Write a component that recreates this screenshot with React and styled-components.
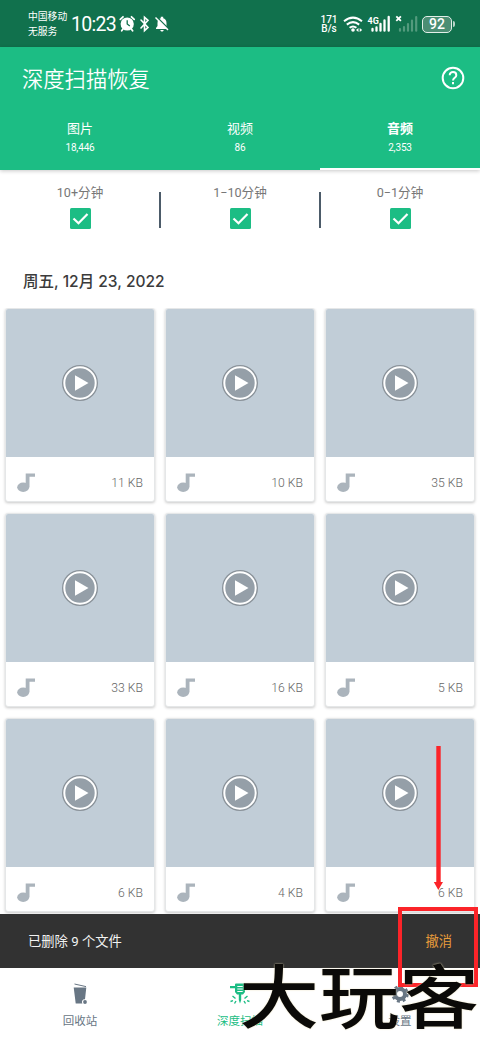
import React from 'react';
import styled, { createGlobalStyle } from 'styled-components';

const GlobalStyle = createGlobalStyle`
  * {
    box-sizing: border-box;
  }

  body {
    margin: 0;
    background: #fff;
    font-family: Roboto, 'Noto Sans CJK SC', sans-serif;
  }
`;

const Screen = styled.div`
  position: relative;
  display: flex;
  flex-direction: column;
  width: 480px;
  height: 1040px;
  overflow: hidden;
  background: #fff;
`;

const StatusBar = styled.div`
  display: flex;
  align-items: center;
  flex: none;
  height: 47px;
  padding: 1px 27px 0 28px;
  background: #11714d;
  color: #fff;
`;

const Carrier = styled.div`
  width: 43px;
  font-size: 9.8px;
  line-height: 15px;
  white-space: nowrap;
`;

const Clock = styled.div`
  width: 48px;
  padding-top: 2px;
  font-size: 19.5px;
  letter-spacing: -0.7px;
  line-height: 24px;
`;

const StatusIcons = styled.svg`
  display: block;
  flex: none;
  margin-left: ${(props) => props.$gap || '0'};
`;

const Speed = styled.div`
  width: 20px;
  margin-left: auto;
  font-size: 10px;
  font-weight: 500;
  line-height: 9.5px;
  text-align: center;
`;

const Battery = styled.div`
  position: relative;
  width: 30px;
  height: 17px;
  margin-left: 3px;
  margin-right: 1px;
  border: 1.5px solid #e3efe9;
  border-radius: 5px;
  background: #4b8e74;
  font-size: 14px;
  font-weight: 500;
  line-height: 15px;
  text-align: center;

  &::after {
    content: '';
    position: absolute;
    top: 4px;
    right: -4px;
    width: 2px;
    height: 6px;
    border-radius: 0 2px 2px 0;
    background: #b9d4c8;
  }
`;

const Header = styled.header`
  flex: none;
  height: 123px;
  background: #1cbd84;
  color: #fff;
  box-shadow: 0 1px 4px rgba(0, 0, 0, 0.22);
`;

const TitleRow = styled.div`
  display: flex;
  align-items: center;
  justify-content: space-between;
  height: 62px;
  padding: 0 15px 0 22px;
`;

const Title = styled.h1`
  margin: 0;
  font-family: 'Noto Sans CJK SC', sans-serif;
  font-size: 21.3px;
  font-weight: 350;
  line-height: 30px;
`;

const Tabs = styled.div`
  display: grid;
  grid-template-columns: repeat(3, 1fr);
  height: 61px;
`;

const Tab = styled.div`
  padding-top: 10px;
  border-bottom: 2px solid ${(props) => (props.$active ? '#fff' : 'transparent')};
  font-size: 13px;
  font-weight: ${(props) => (props.$active ? 700 : 400)};
  line-height: 20px;
  text-align: center;
`;

const TabCount = styled.div`
  font-size: 10px;
  font-weight: 400;
  letter-spacing: -0.15px;
  line-height: 18px;
`;

const Filters = styled.div`
  display: grid;
  grid-template-columns: repeat(3, 1fr);
  flex: none;
  height: 84px;
`;

const Filter = styled.div`
  position: relative;
  display: flex;
  flex-direction: column;
  align-items: center;
  padding-top: 13px;
  color: #777;
  font-size: 12.6px;
  line-height: 19px;

  &:not(:last-child)::after {
    content: '';
    position: absolute;
    top: 22px;
    right: -0.5px;
    width: 1.5px;
    height: 36px;
    background: #4c5b69;
  }
`;

const Check = styled.svg`
  display: block;
  margin-top: 6px;
`;

const DateTitle = styled.h2`
  flex: none;
  height: 54px;
  margin: 0;
  padding: 16px 0 0 23px;
  color: #3b3b3b;
  font-family: Inter, 'Noto Sans CJK SC', sans-serif;
  font-size: 15.5px;
  font-weight: 500;
  line-height: 24px;
`;

const Grid = styled.div`
  display: grid;
  grid-template-columns: repeat(3, 150px);
  grid-auto-rows: 194px;
  gap: 11px 10px;
  flex: none;
  height: 606px;
  padding-left: 5px;
  overflow: hidden;
`;

const Card = styled.div`
  display: flex;
  flex-direction: column;
  overflow: hidden;
  border: 1px solid #e5e7e8;
  border-radius: 3px;
  background: #fff;
  box-shadow: 0 1px 3px rgba(0, 0, 0, 0.22);
`;

const Thumb = styled.div`
  display: grid;
  place-items: center;
  height: 148px;
  background: #c1cdd7;
`;

const CardFooter = styled.div`
  display: flex;
  align-items: center;
  justify-content: space-between;
  flex: 1;
  padding: 7px 11px 0 11px;
  color: #666;
  font-size: 12.2px;
  font-weight: 300;
`;

const Snackbar = styled.div`
  display: flex;
  align-items: center;
  justify-content: space-between;
  flex: none;
  height: 54px;
  padding: 0 28px 2px;
  background: #323232;
  color: #f2f2f2;
  font-size: 13.3px;
`;

const Undo = styled.span`
  color: #e79c3b;
`;

const BottomNav = styled.nav`
  display: grid;
  grid-template-columns: repeat(3, 1fr);
  flex: none;
  height: 72px;
  background: #fff;
`;

const NavItem = styled.div`
  display: flex;
  flex-direction: column;
  align-items: center;
  padding-top: 15px;
  color: ${(props) => (props.$active ? '#1cbd84' : '#687684')};
  font-size: 11.5px;
  line-height: 18px;

  svg {
    display: block;
    margin-bottom: 7px;
  }
`;

const Arrow = styled.svg`
  position: absolute;
  top: 746px;
  left: 433px;
`;

const Highlight = styled.div`
  position: absolute;
  top: 907px;
  left: 398px;
  width: 80px;
  height: 80px;
  border: 4px solid #fb2429;
`;

const Watermark = styled.div`
  position: absolute;
  top: 953px;
  left: 239px;
  color: #0b0a08;
  font-family: 'Noto Sans CJK SC', sans-serif;
  font-size: 80px;
  font-weight: 500;
  line-height: 80px;
  white-space: nowrap;
  transform: scaleY(0.87);
  text-shadow: 0 0 2px #e9dfb8;
`;

const tabs = [
  { label: '图片', count: '18,446' },
  { label: '视频', count: '86' },
  { label: '音频', count: '2,353', active: true },
];

const filters = ['10+分钟', '1−10分钟', '0−1分钟'];

const sizes = [11, 10, 35, 33, 16, 5, 6, 4, 6];

const PlayIcon = () => (
  <svg width="36" height="36" viewBox="0 0 36 36">
    <circle cx="18" cy="18" r="18" fill="#8a9299" />
    <circle cx="18" cy="18" r="15.7" fill="#959fa8" stroke="#fff" strokeWidth="2" />
    <path d="M13 10.2v15.6L26.5 18z" fill="#fff" />
  </svg>
);

const NoteIcon = () => (
  <svg width="18" height="19" viewBox="0 0 18 19" fill="#abb4bc">
    <ellipse cx="6.2" cy="14.2" rx="6" ry="4.7" />
    <path d="M8.7 .5H18v3.3h-5.5V14H8.7z" />
  </svg>
);

const LeftStatus = () => (
  <StatusIcons width="50" height="18" viewBox="0 0 50 18">
    <g fill="none" stroke="#fff" strokeWidth="1.8" strokeLinecap="round">
      <path d="M1.3 4.3 4 1.8M12.5 1.8l2.7 2.5M4 14l-1.3 1.8M12.3 14l1.3 1.8" />
      <path d="m22 5 7 7.4-3.5 3.2V2.2L29 5.4 22 13" strokeWidth="1.6" />
    </g>
    <circle cx="8.2" cy="9" r="6.6" fill="#fff" />
    <path d="M8.2 5.2V9l2.6 2" fill="none" stroke="#11714d" strokeWidth="1.3" />
    <path d="M37 14h12v-1l-1.5-2V8c0-3-1.5-4.4-3.3-4.8V1.8h-2.4v1.4C40 3.6 38.5 5 38.5 8v3L37 13zM41.3 15h3.4c-.4 2-3 2-3.4 0" fill="#fff" />
    <path d="m37.8 2 12 12" stroke="#11714d" strokeWidth="1.4" />
    <path d="m36.5 2.5 12.5 12.5" stroke="#fff" strokeWidth="1.4" />
  </StatusIcons>
);

const RightStatus = () => (
  <StatusIcons width="76" height="20" viewBox="0 0 76 20" $gap="4px">
    <g fill="none" stroke="#fff" strokeWidth="2">
      <path d="M1 7.2q9-7.2 18 0M3.8 10.6q6.2-5 12.4 0M6.6 13.8q3.4-2.7 6.8 0" />
    </g>
    <circle cx="10" cy="16" r="1.8" fill="#fff" />
    <path d="m13 16 2.5-2v4zm6.2 0-2.5-2v4z" fill="#fff" />
    <text x="24.5" y="9.5" fill="#fff" fontFamily="Roboto, sans-serif" fontSize="9" fontWeight="700">4G</text>
    <g stroke="#fff" strokeWidth="2.3" strokeLinecap="round">
      <path d="M29.5 15v1.7M33.5 13.5v3.2M37.5 10v6.7M41.5 6.5v10.2M45.7 3v13.7" />
    </g>
    <path d="m53.3 2.3 4.6 4.6m0-4.6-4.6 4.6" stroke="#fff" strokeWidth="1.8" />
    <g stroke="#539a7d" strokeWidth="2.2" strokeLinecap="round">
      <path d="M57 15v1.7M61 13v3.7M65 10v6.7M69 6.5v10.2M73.2 3v13.7" />
    </g>
  </StatusIcons>
);

const HelpIcon = () => (
  <svg width="24" height="24" viewBox="0 0 24 24" fill="none" stroke="#fff" strokeWidth="2">
    <circle cx="12" cy="12" r="10.3" />
    <path d="M8.7 9.2c0-4.2 6.6-4.1 6.6 0 0 2.6-3.3 2.7-3.3 5.4M12 16v2.3" />
  </svg>
);

const BinIcon = () => (
  <svg width="18" height="22" viewBox="0 0 18 22">
    <path d="m3.5 1 11.5 2.6" stroke="#687684" strokeWidth="1" />
    <path d="M2.7 4.5h12.6l-1.3 11.8a2.7 2.7 0 0 0-2.6 4.2H4.7z" fill="#687684" />
    <circle cx="14" cy="19" r="1.9" fill="#687684" />
  </svg>
);

const DrillIcon = () => (
  <svg width="22" height="22" viewBox="0 0 22 22">
    <path d="M1 3h5V1.5Q6 .5 7 .5h8q1 0 1 1V3h5v2.2h-5V9l-2 2.5h-1.8V17L11 20.5 9.8 17v-5.5H8L6 9V5.2H1z" fill="#1cbd84" />
    <path d="M8.3 3.5h5.4M8.3 6h5.4M8.3 8.5h5.4" stroke="#fff" strokeWidth="1.1" />
    <path d="m3.5 13 3 2.5M1.5 18.5l2.5-.8M7 18l-1.5 2.5M18.5 13l-3 2.5M20.5 18.5l-2.5-.8M15 18l1.5 2.5" stroke="#1cbd84" strokeWidth="1.4" />
  </svg>
);

const GearIcon = () => (
  <svg width="18" height="22" viewBox="0 0 18 22" fill="none" stroke="#687684">
    <circle cx="9" cy="11" r="5" strokeWidth="4" />
    <circle cx="9" cy="11" r="7.5" strokeWidth="2.5" strokeDasharray="3 2.9" />
  </svg>
);

const App = () => {
  return (
    <Screen>
      <GlobalStyle />
      <StatusBar>
        <Carrier>
          <div>中国移动</div>
          <div>无服务</div>
        </Carrier>
        <Clock>10:23</Clock>
        <LeftStatus />
        <Speed>
          171
          <br />
          B/s
        </Speed>
        <RightStatus />
        <Battery>92</Battery>
      </StatusBar>
      <Header>
        <TitleRow>
          <Title>深度扫描恢复</Title>
          <HelpIcon />
        </TitleRow>
        <Tabs>
          {tabs.map((tab) => (
            <Tab key={tab.label} $active={tab.active}>
              {tab.label}
              <TabCount>{tab.count}</TabCount>
            </Tab>
          ))}
        </Tabs>
      </Header>
      <Filters>
        {filters.map((label) => (
          <Filter key={label}>
            {label}
            <Check width="21" height="21" viewBox="0 0 21 21">
              <rect width="21" height="21" rx="1.5" fill="#1cbd84" />
              <path d="m3.5 10.5 5 4.8 9-9.3" fill="none" stroke="#fff" strokeWidth="2.2" />
            </Check>
          </Filter>
        ))}
      </Filters>
      <DateTitle>周五, 12月 23, 2022</DateTitle>
      <Grid>
        {sizes.map((size, index) => (
          <Card key={index}>
            <Thumb>
              <PlayIcon />
            </Thumb>
            <CardFooter>
              <NoteIcon />
              <span>{size} KB</span>
            </CardFooter>
          </Card>
        ))}
      </Grid>
      <Snackbar>
        <span>已删除 9 个文件</span>
        <Undo>撤消</Undo>
      </Snackbar>
      <BottomNav>
        <NavItem>
          <BinIcon />
          回收站
        </NavItem>
        <NavItem $active>
          <DrillIcon />
          深度扫描
        </NavItem>
        <NavItem>
          <GearIcon />
          设置
        </NavItem>
      </BottomNav>
      <Arrow width="11" height="144" viewBox="0 0 11 144" fill="#fb2429">
        <path d="M3.3 0h4.4v136H10l-4.7 8L.8 136h2.5z" />
      </Arrow>
      <Highlight />
      <Watermark>大玩客</Watermark>
    </Screen>
  );
};

export default App;
